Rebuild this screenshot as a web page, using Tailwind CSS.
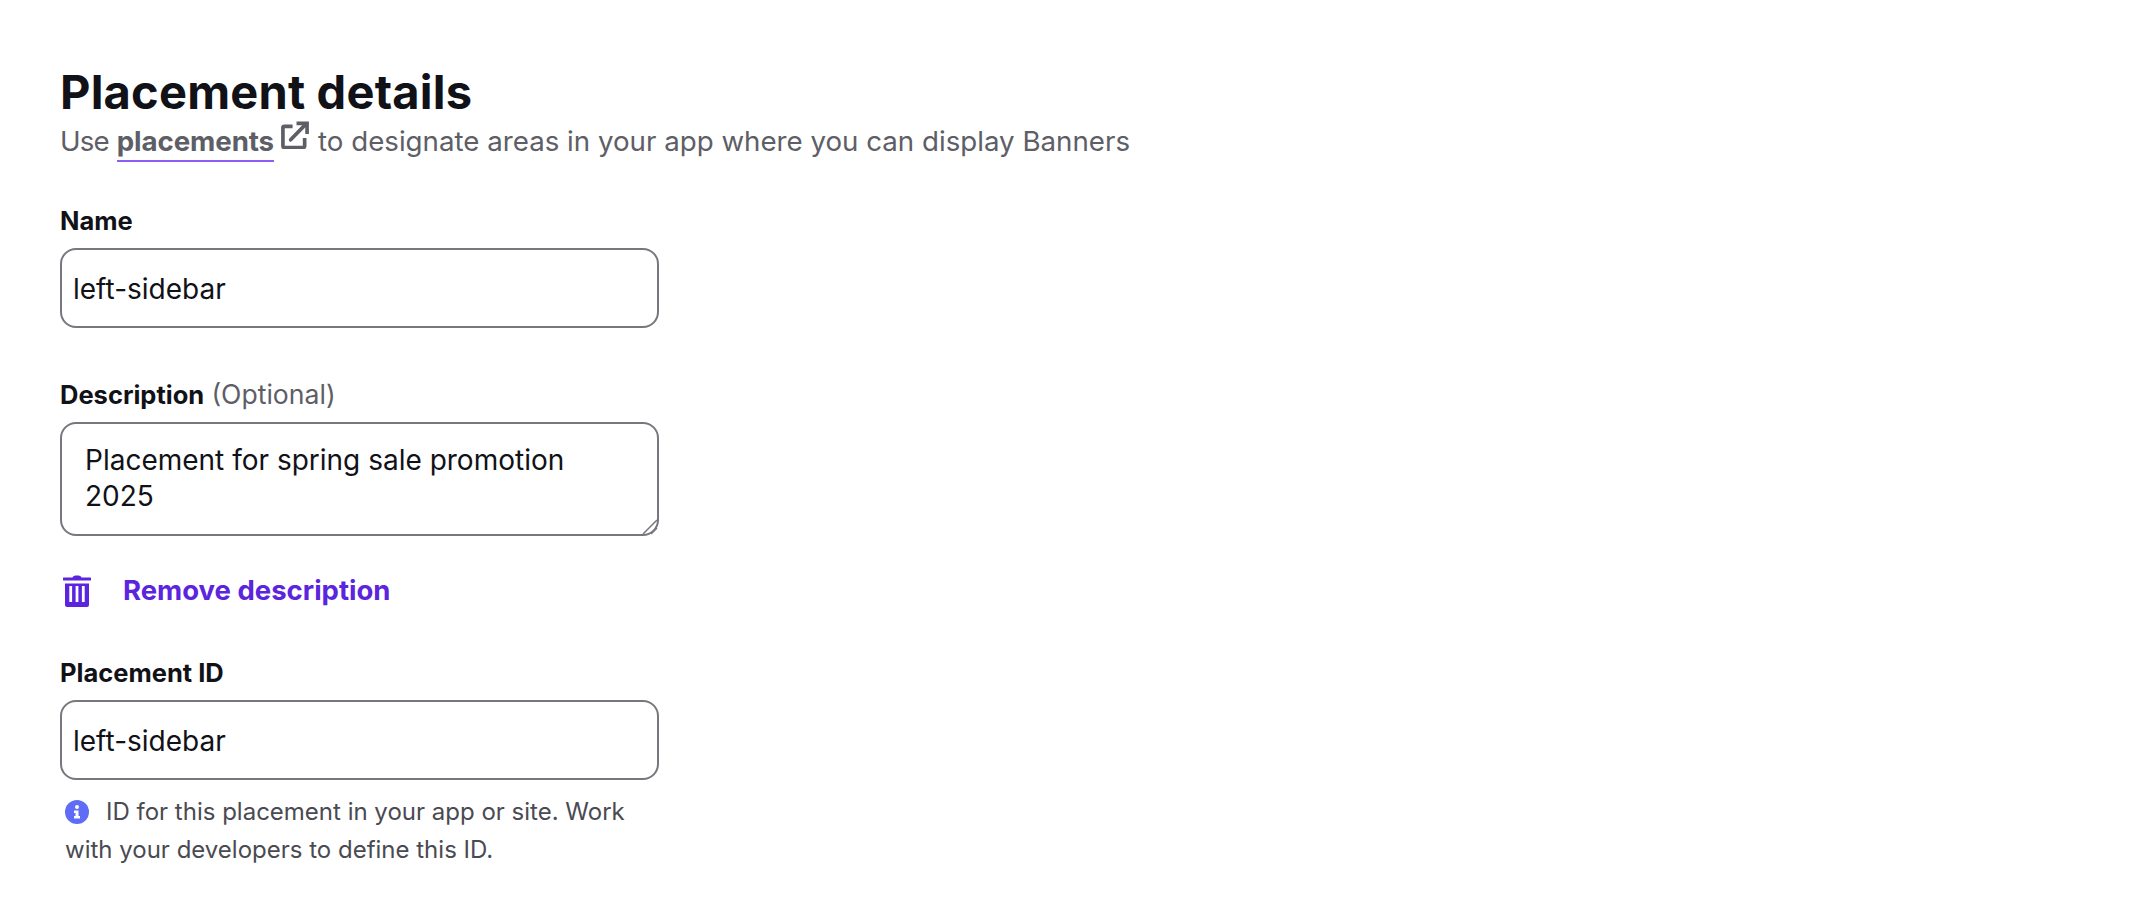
<!doctype html>
<html><head><meta charset="utf-8"><script src="https://cdn.jsdelivr.net/npm/@tailwindcss/browser@4"></script></head>
<body class="bg-white font-['Inter',sans-serif]">
<div class="w-[2144px] h-[922px] overflow-hidden pl-[60px] pt-[62px]">
  <h1 class="text-[47px] leading-[60px] font-bold text-[#111118] tracking-[0.2px]">Placement details</h1>
  <p class="mt-[-1px] h-[40px] text-[27.7px] leading-[40px] text-[#5e5e66] whitespace-nowrap"><span class="tracking-[-0.8px]">Use</span> <a class="font-bold border-b-2 border-[#8b5cf6] pb-[2px] tracking-[-0.1px]">placements</a><svg class="inline-block ml-[7px] mr-[9px] w-[28px] h-[28px] align-[2px]" viewBox="0 0 29 29" fill="none" stroke="#5e5e66" stroke-width="3.8"><path d="M12 5.500H3.500a1.500 1.500 0 0 0-1.500 1.500V26a1.500 1.500 0 0 0 1.500 1.500H23a1.500 1.500 0 0 0 1.500-1.500V17.500"/><path stroke-linecap="round" d="M10 19.500 26 3"/><path stroke-linecap="square" d="M18 2.500h9v9"/></svg>to designate areas in your app where you can display Banners</p>
  <form class="w-[599px]">
    <label class="block mt-[44px] text-[25.5px] leading-[32px] font-bold text-[#111118]">Name</label>
    <input class="block mt-[11px] w-full h-[80px] border-2 border-[#77777d] rounded-[16px] px-[11px] pt-[1px] text-[28px] text-[#111118] outline-none" value="left-sidebar">
    <label class="block mt-[50px] text-[25.5px] leading-[32px] text-[#5e5e66]"><b class="text-[#111118]">Description</b> <span class="text-[26.600px]">(Optional)</span></label>
    <div class="relative mt-[11px] h-[114px]">
      <textarea class="block w-full h-full resize-none border-2 border-[#77777d] rounded-[16px] px-[23px] py-[18px] text-[28px] leading-[36px] text-[#111118] outline-none">Placement for spring sale promotion 2025</textarea>
      <svg class="absolute right-[1px] bottom-[1px] w-[16px] h-[16px]" viewBox="0 0 16 16" fill="none" stroke="#77777d" stroke-width="1.500"><path d="M1 15 15 1M9 15l6-6"/></svg>
    </div>
    <button type="button" class="flex items-center mt-[32px] h-[46px] text-[27.500px] font-bold text-[#5b25de]">
      <svg class="ml-[3px] w-[28px] h-[32px] mr-[32px]" viewBox="0 0 28 32"><path fill="#5b25de" d="M1 2.500h8.500C10 1 11.500.5 14 .5s4 .5 4.500 2H27a1.500 1.500 0 0 1 0 3H1a1.500 1.500 0 0 1 0-3Z"/><path fill="#5b25de" d="M2 8.500h24V30a2 2 0 0 1-2 2H4a2 2 0 0 1-2-2Z"/><path stroke="#fff" stroke-width="2.800" d="M7.700 11v16M14 11v16M20.300 11v16"/></svg>
      Remove description</button>
    <label class="block mt-[43px] text-[25.500px] leading-[32px] font-bold text-[#111118]">Placement ID</label>
    <input class="block mt-[11px] w-full h-[80px] border-2 border-[#77777d] rounded-[16px] px-[11px] pt-[1px] text-[28px] text-[#111118] outline-none" value="left-sidebar">
    <p class="mt-[13px] pl-[5px] text-[24px] leading-[38px] text-[#4a4a52]"><svg class="inline-block w-[24px] h-[24px] mr-[17px] align-[-4px]" viewBox="0 0 24 24"><circle cx="12" cy="12" r="12" fill="#5f6cf5"/><circle cx="12" cy="7" r="2" fill="#fff"/><path fill="#fff" d="M9 10.500h4.500V16H15v2.500H9V16h1.500v-3H9Z"/></svg>ID for this placement in your app or site. Work with your developers to define this ID.</p>
  </form>
</div>
</body></html>
